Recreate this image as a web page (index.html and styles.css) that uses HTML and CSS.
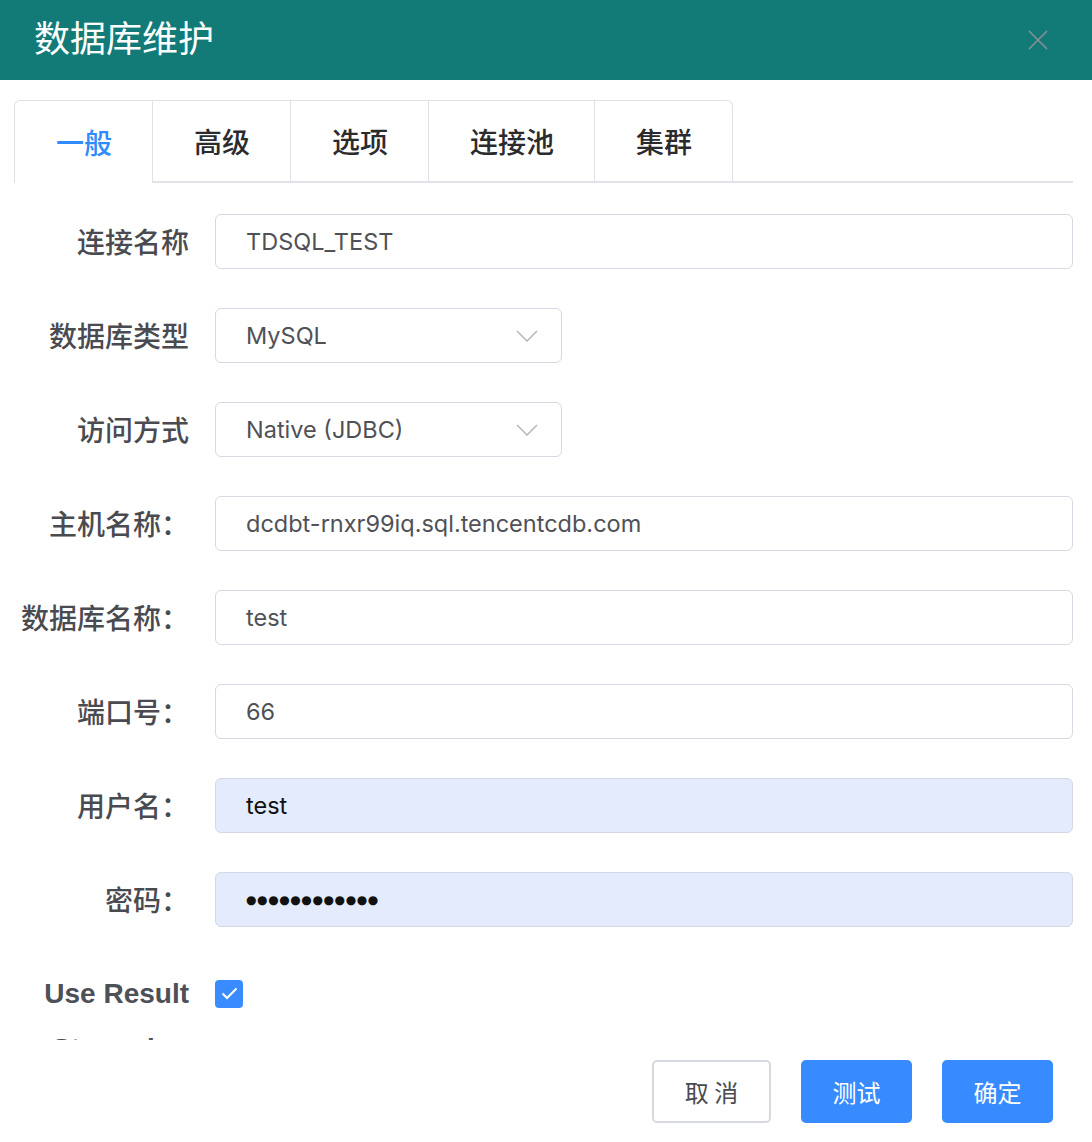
FILE: index.html
```html
<!DOCTYPE html>
<html lang="zh-CN">
<head>
<meta charset="utf-8">
<title>数据库维护</title>
<link rel="stylesheet" href="styles.css">
</head>
<body>
<div class="dialog">
  <header class="header">
    <h1 class="title">数据库维护</h1>
    <svg class="close" width="20" height="20" viewBox="0 0 20 20" aria-label="关闭">
      <path d="M1 1 L19 19 M19 1 L1 19" stroke="#8a8f94" stroke-width="1.6" fill="none"/>
    </svg>
  </header>
  <main class="body">
    <nav class="tabbar">
      <div class="tab active">一般</div>
      <div class="tab">高级</div>
      <div class="tab">选项</div>
      <div class="tab">连接池</div>
      <div class="tab last">集群</div>
    </nav>
    <div class="form">
      <div class="row">
        <div class="label">连接名称</div>
        <div class="field">TDSQL_TEST</div>
      </div>
      <div class="row">
        <div class="label">数据库类型</div>
        <div class="field select">MySQL
          <svg class="chev" width="22" height="12" viewBox="0 0 22 12"><path d="M1 1 L11 11 L21 1" stroke="#b3b7bf" stroke-width="1.5" fill="none"/></svg>
        </div>
      </div>
      <div class="row">
        <div class="label">访问方式</div>
        <div class="field select">Native (JDBC)
          <svg class="chev" width="22" height="12" viewBox="0 0 22 12"><path d="M1 1 L11 11 L21 1" stroke="#b3b7bf" stroke-width="1.5" fill="none"/></svg>
        </div>
      </div>
      <div class="row">
        <div class="label">主机名称：</div>
        <div class="field">dcdbt-rnxr99iq.sql.tencentcdb.com</div>
      </div>
      <div class="row">
        <div class="label">数据库名称：</div>
        <div class="field">test</div>
      </div>
      <div class="row">
        <div class="label">端口号：</div>
        <div class="field">66</div>
      </div>
      <div class="row">
        <div class="label">用户名：</div>
        <div class="field filled">test</div>
      </div>
      <div class="row">
        <div class="label">密码：</div>
        <div class="field filled dots">●●●●●●●●●●●●</div>
      </div>
      <div class="row">
        <div class="label bold">Use Result Streaming</div>
        <div class="checkcell">
          <span class="checkbox">
            <svg width="17" height="13" viewBox="0 0 17 13"><path d="M1.5 6.5 L6 11 L15.5 1.5" stroke="#fff" stroke-width="2" fill="none"/></svg>
          </span>
        </div>
      </div>
    </div>
  </main>
  <footer class="footer">
    <button class="btn cancel">取 消</button>
    <button class="btn primary">测试</button>
    <button class="btn primary">确定</button>
  </footer>
</div>
</body>
</html>
```

FILE: styles.css
```css
* { box-sizing: border-box; }
html, body { margin: 0; padding: 0; background: #fff; }
body {
  font-family: Inter, "Liberation Sans", "Noto Sans CJK SC", sans-serif;
  color: #4d4f55;
}
.dialog { width: 1092px; height: 1142px; display: flex; flex-direction: column; }
.header {
  height: 80px;
  background: #127b78;
  display: flex;
  align-items: center;
  justify-content: space-between;
  padding: 0 44px 0 34px;
  flex: none;
}
.title {
  margin: 0;
  font-family: "Noto Sans CJK SC", sans-serif;
  font-weight: 400;
  font-size: 36px;
  color: #fff;
  line-height: 1;
  position: relative;
  top: -4px;
}
.close { display: block; }
.body { padding: 20px 19px 0 14px; flex: none; }
.tabbar {
  display: flex;
  height: 83px;
  border-bottom: 2px solid #e1e3e8;
}
.tab {
  height: 81px;
  padding: 0 40px 0 41px;
  border-top: 1px solid #dfe1e6;
  border-right: 1px solid #dfe1e6;
  display: flex;
  align-items: center;
  justify-content: center;
  font-family: "Noto Sans CJK SC", sans-serif;
  font-weight: 500;
  font-size: 28px;
  color: #2b2b2e;
  background: #fff;
}
.tab.active {
  color: #2f8bff;
  border-left: 1px solid #dfe1e6;
  border-top-left-radius: 6px;
  height: 83px;
  margin-bottom: -2px;
  position: relative;
}
.tab.last { border-top-right-radius: 6px; }
.form {
  height: 857px;
  overflow: hidden;
  padding-top: 31px;
}
.row {
  display: grid;
  grid-template-columns: 175px 1fr;
  column-gap: 26px;
  margin-bottom: 39px;
}
.label {
  font-family: "Noto Sans CJK SC", sans-serif;
  font-weight: 500;
  font-size: 28px;
  line-height: 55px;
  text-align: right;
  color: #4a4b50;
}
.label.bold {
  font-family: "Liberation Sans", "Noto Sans CJK SC", sans-serif;
  font-weight: 700;
  font-size: 28px;
  color: #4e5057;
}
.field {
  height: 55px;
  border: 1px solid #d6d9e1;
  border-radius: 6px;
  padding: 0 30px;
  display: flex;
  align-items: center;
  font-size: 23.5px;
  color: #4f5157;
  background: #fff;
}
.field.select {
  width: 347px;
  justify-content: space-between;
  padding-right: 23px;
}
.chev { display: block; }
.field.filled {
  background: #e3ebfc;
  border-color: #d3d8e4;
  color: #111;
}
.field.dots {
  font-family: "DejaVu Sans", sans-serif;
  font-size: 12px;
  letter-spacing: 0.6px;
}
.checkcell { height: 55px; display: flex; align-items: center; }
.checkbox {
  width: 28px;
  height: 28px;
  border-radius: 4px;
  background: #3a8bff;
  display: flex;
  align-items: center;
  justify-content: center;
}
.footer {
  flex: none;
  display: flex;
  justify-content: flex-end;
  gap: 30px;
  padding: 20px 39px 19px;
}
.btn {
  height: 63px;
  width: 111px;
  border-radius: 5px;
  font-family: "Noto Sans CJK SC", sans-serif;
  font-size: 24px;
  border: none;
  margin: 0;
  padding: 0;
}
.btn.cancel {
  width: 119px;
  background: #fff;
  border: 2px solid #d7d9e1;
  color: #4a4b50;
}
.btn.primary { background: #388bff; color: #fff; }
```
